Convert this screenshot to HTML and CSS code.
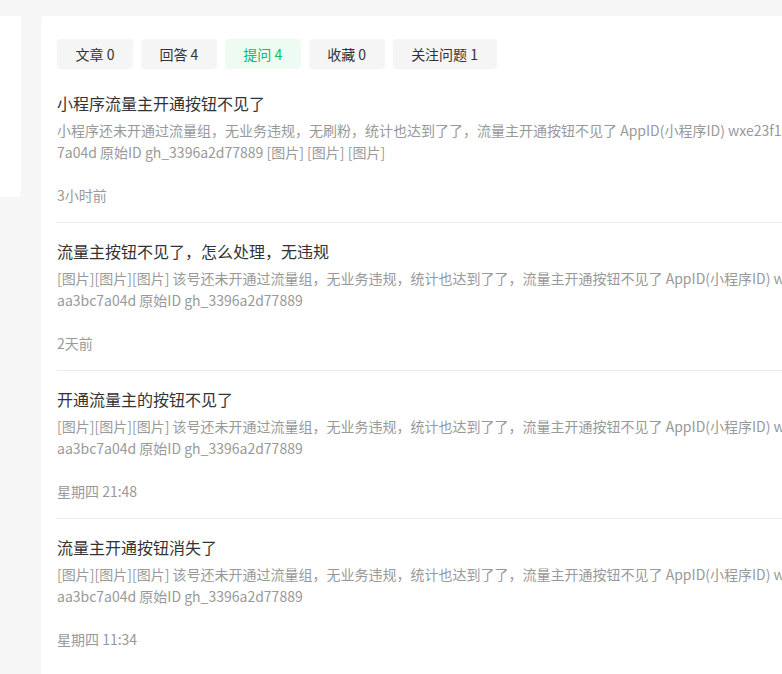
FILE: index.html
```html
<!DOCTYPE html>
<html lang="zh-CN">
<head>
    <meta charset="UTF-8">
    <meta name="viewport" content="width=device-width, initial-scale=1.0">
    <title>我的提问</title>
    <link rel="stylesheet" href="styles.css">
</head>
<body>
    <div class="page">
        <div class="sidebar"></div>
        <div class="main">
            <div class="tabs">
                <div class="tab">文章 0</div>
                <div class="tab">回答 4</div>
                <div class="tab active">提问 4</div>
                <div class="tab">收藏 0</div>
                <div class="tab">关注问题 1</div>
            </div>

            <div class="list">
                <div class="item">
                    <div class="item-title">小程序流量主开通按钮不见了</div>
                    <div class="item-desc">小程序还未开通过流量组，无业务违规，无刷粉，统计也达到了了，流量主开通按钮不见了 AppID(小程序ID) wxe23f1d6b9e5c0aa3bc7a04d 原始ID gh_3396a2d77889 [图片] [图片] [图片]</div>
                    <div class="item-time">3小时前</div>
                </div>
                <div class="item">
                    <div class="item-title">流量主按钮不见了，怎么处理，无违规</div>
                    <div class="item-desc">[图片][图片][图片] 该号还未开通过流量组，无业务违规，统计也达到了了，流量主开通按钮不见了 AppID(小程序ID) wxe23f1d6b9e5c0aa3bc7a04d 原始ID gh_3396a2d77889</div>
                    <div class="item-time">2天前</div>
                </div>
                <div class="item">
                    <div class="item-title">开通流量主的按钮不见了</div>
                    <div class="item-desc">[图片][图片][图片] 该号还未开通过流量组，无业务违规，统计也达到了了，流量主开通按钮不见了 AppID(小程序ID) wxe23f1d6b9e5c0aa3bc7a04d 原始ID gh_3396a2d77889</div>
                    <div class="item-time">星期四 21:48</div>
                </div>
                <div class="item">
                    <div class="item-title">流量主开通按钮消失了</div>
                    <div class="item-desc">[图片][图片][图片] 该号还未开通过流量组，无业务违规，统计也达到了了，流量主开通按钮不见了 AppID(小程序ID) wxe23f1d6b9e5c0aa3bc7a04d 原始ID gh_3396a2d77889</div>
                    <div class="item-time">星期四 11:34</div>
                </div>
            </div>
        </div>
    </div>
</body>
</html>
```

FILE: styles.css
```css
html, body {
    margin: 0;
    padding: 0;
    overflow: hidden;
}

body {
    font-family: "Noto Sans CJK SC", "Noto Sans", sans-serif;
    background-color: #f6f6f6;
    color: #333;
}

.page {
    display: flex;
    align-items: flex-start;
    gap: 20px;
    padding-top: 16px;
    width: 960px;
}

.sidebar {
    width: 21px;
    height: 181px;
    background: #fff;
    border-radius: 0 0 4px 0;
    flex-shrink: 0;
}

.main {
    width: 867px;
    min-height: 700px;
    background: #fff;
    border-radius: 4px;
    padding: 23px 16px 0;
    box-sizing: border-box;
    flex-shrink: 0;
}

.tabs {
    display: flex;
    gap: 8px;
    margin-bottom: 6px;
}

.tab {
    height: 30px;
    line-height: 30px;
    padding: 0 18.5px;
    font-size: 14px;
    color: #333;
    background: #f5f5f5;
    border-radius: 4px;
}

.tab.active {
    color: #07c160;
    background: #eefbf3;
}

.item {
    padding: 16px 0;
    border-bottom: 1px solid #ececec;
}

.item:last-child {
    border-bottom: none;
}

.item-title {
    font-size: 16px;
    line-height: 24px;
    color: #333;
}

.item-desc {
    margin-top: 4px;
    font-size: 14px;
    line-height: 22px;
    color: #999;
    word-break: break-all;
}

.item-time {
    margin-top: 21px;
    font-size: 14px;
    line-height: 22px;
    color: #999;
}
```
